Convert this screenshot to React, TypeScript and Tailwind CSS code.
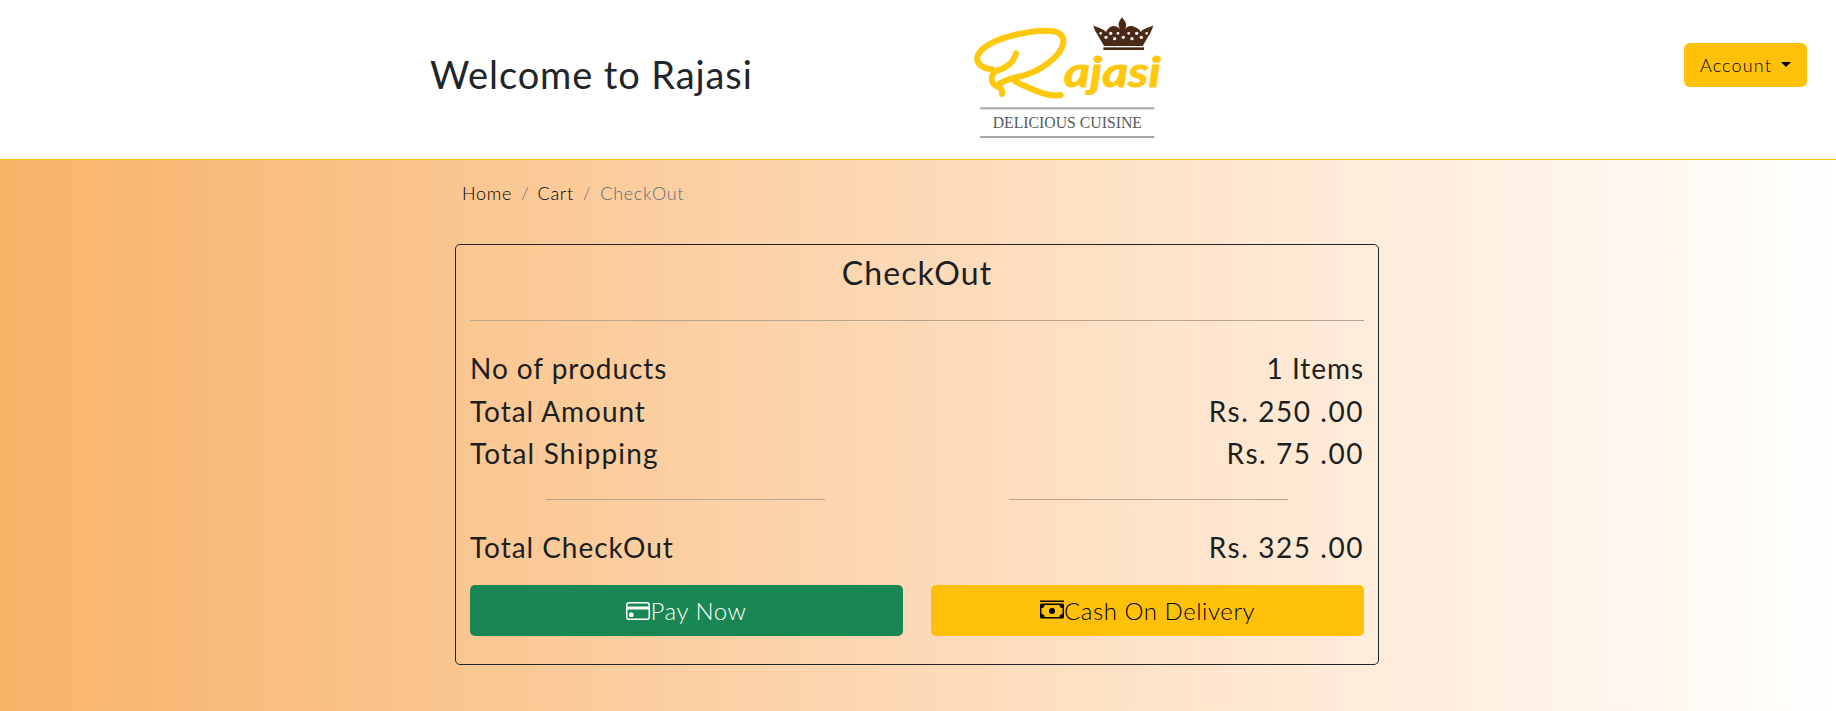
export default function App() {
  const font = { fontFamily: '"Lato", "Open Sans", sans-serif' };
  return (
    <div style={font} className="w-[1836px] h-[711px] overflow-hidden bg-white text-[#1c1f22]">
      <header className="h-[160px] flex items-start border-b border-[#ffc107] bg-white">
        <h2 className="ml-[430px] mt-[50px] w-[510px] text-[38px] leading-[48px] font-normal tracking-[0.9px] text-[#212529]">Welcome to Rajasi</h2>
        <svg width="260" height="159" viewBox="0 0 780 477" className="shrink-0">
          <g fill="#4a2a14">
            <path d="M492 138 L470 100 C464 92 462 84 460 76 C472 84 486 84 498 96 C504 84 516 74 530 80 C536 82 540 86 542 90 C536 80 530 72 546 52 C552 62 566 72 554 88 C560 80 572 74 586 82 C594 86 600 90 602 96 C612 84 628 84 640 76 C636 90 630 104 622 114 L608 138Z" />
            <rect x="490" y="142" width="122" height="8" />
          </g>
          <g fill="#fff">
            <circle cx="482" cy="100" r="4" /><circle cx="498" cy="112" r="5" /><circle cx="512" cy="100" r="5" /><circle cx="524" cy="116" r="5" /><circle cx="534" cy="100" r="4" />
            <circle cx="550" cy="112" r="5" /><circle cx="566" cy="100" r="4" /><circle cx="576" cy="116" r="5" /><circle cx="590" cy="100" r="5" /><circle cx="604" cy="112" r="5" /><circle cx="620" cy="100" r="4" />
          </g>
          <g fill="none" stroke="#ffc80a" strokeWidth="18" strokeLinecap="round" strokeLinejoin="round">
            <path d="M155 208 C118 205 100 180 120 155 C160 110 290 85 345 95 C385 105 375 150 330 185 C300 210 262 226 228 232 C210 236 225 246 250 256 C290 275 330 292 362 285" />
            <path d="M228 160 C222 185 200 205 170 212 C150 222 150 250 170 258 C180 262 188 270 186 282" />
            <path d="M170 258 C190 240 210 236 228 232" />
          </g>
          <text x="372" y="262" fill="#ffc80a" stroke="#ffc80a" strokeWidth="3" fontFamily="'Lato', sans-serif" fontStyle="italic" fontWeight="700" fontSize="128" textLength="290" lengthAdjust="spacingAndGlyphs">ajasi</text>
          <rect x="120" y="322" width="523" height="6" fill="#a8a8a8" />
          <rect x="120" y="408" width="523" height="6" fill="#a8a8a8" />
          <text x="158" y="384" fill="#5a5a5a" fontFamily="'Liberation Serif', serif" fontSize="50" textLength="448" lengthAdjust="spacingAndGlyphs">DELICIOUS CUISINE</text>
        </svg>
        <button className="ml-auto mr-[29px] mt-[43px] h-[44px] w-[123px] pt-[1px] rounded-md bg-[#ffc107] text-[18px] font-light tracking-[1.15px] flex items-center justify-center gap-[9px] text-black">
          Account
          <span className="w-0 h-0 border-x-[5px] border-x-transparent border-t-[5px] border-t-black mb-[2px]" />
        </button>
      </header>
      <main className="h-[551px] bg-gradient-to-r from-[#f7b267] to-[#ffffff] pl-[455px]">
        <nav className="pl-[7px] pt-[20px] h-[84px] text-[18px] leading-[27px] font-light flex tracking-[0.7px] text-black">
          <span>Home</span><span className="mx-[9px] text-[#6c757d]">/</span><span className="-ml-[1px]">Cart</span><span className="mx-[9px] text-[#6c757d]">/</span><span className="text-[#5f6b75]">CheckOut</span>
        </nav>
        <section className="w-[924px] h-[421px] border border-[#212529] rounded-[5px] px-[14px]">
          <h3 className="text-center text-[32px] leading-[40px] pt-[8px] h-[47px] tracking-[1.1px]">CheckOut</h3>
          <hr className="mt-[28px] border-t border-[#b8a58c]" />
          <div className="mt-[26px] text-[28px] leading-[42.5px] tracking-[0.95px]">
            <div className="flex justify-between"><span>No of products</span><span>1 Items</span></div>
            <div className="flex justify-between"><span>Total Amount</span><span className="tracking-[1.55px]">Rs. 250 .00</span></div>
            <div className="flex justify-between"><span className="tracking-[1.2px]">Total Shipping</span><span className="tracking-[1.55px]">Rs. 75 .00</span></div>
          </div>
          <div className="mt-[24px] px-[76px] flex justify-between">
            <hr className="w-[279px] border-t border-[#b8a58c]" />
            <hr className="w-[279px] border-t border-[#b8a58c]" />
          </div>
          <div className="mt-[26px] flex justify-between text-[28px] leading-[42.5px] tracking-[0.95px]"><span>Total CheckOut</span><span className="tracking-[1.55px]">Rs. 325 .00</span></div>
          <div className="mt-[17px] flex gap-[28px]">
            <button className="flex-1 h-[51px] rounded-[5px] bg-[#198754] text-white text-[24px] font-light flex items-center justify-center tracking-[0.55px]">
              <svg width="24" height="24" viewBox="0 0 16 16" fill="currentColor"><path d="M0 4a2 2 0 0 1 2-2h12a2 2 0 0 1 2 2v8a2 2 0 0 1-2 2H2a2 2 0 0 1-2-2V4zm2-1a1 1 0 0 0-1 1v1h14V4a1 1 0 0 0-1-1H2zm13 4H1v5a1 1 0 0 0 1 1h12a1 1 0 0 0 1-1V7z" /><path d="M2 10a1 1 0 0 1 1-1h1a1 1 0 0 1 1 1v1a1 1 0 0 1-1 1H3a1 1 0 0 1-1-1v-1z" /></svg>
              Pay Now
            </button>
            <button className="flex-1 h-[51px] rounded-[5px] bg-[#ffc107] text-black text-[24px] font-light flex items-center justify-center tracking-[0.55px]">
              <svg width="24" height="24" viewBox="0 0 16 16" fill="currentColor"><path d="M8 10a2 2 0 1 0 0-4 2 2 0 0 0 0 4z" /><path d="M0 4a1 1 0 0 1 1-1h14a1 1 0 0 1 1 1v8a1 1 0 0 1-1 1H1a1 1 0 0 1-1-1V4zm3 0a2 2 0 0 1-2 2v4a2 2 0 0 1 2 2h10a2 2 0 0 1 2-2V6a2 2 0 0 1-2-2H3z" /><rect x="0" y="1" width="16" height="1" /></svg>
              Cash On Delivery
            </button>
          </div>
        </section>
      </main>
    </div>
  );
}
